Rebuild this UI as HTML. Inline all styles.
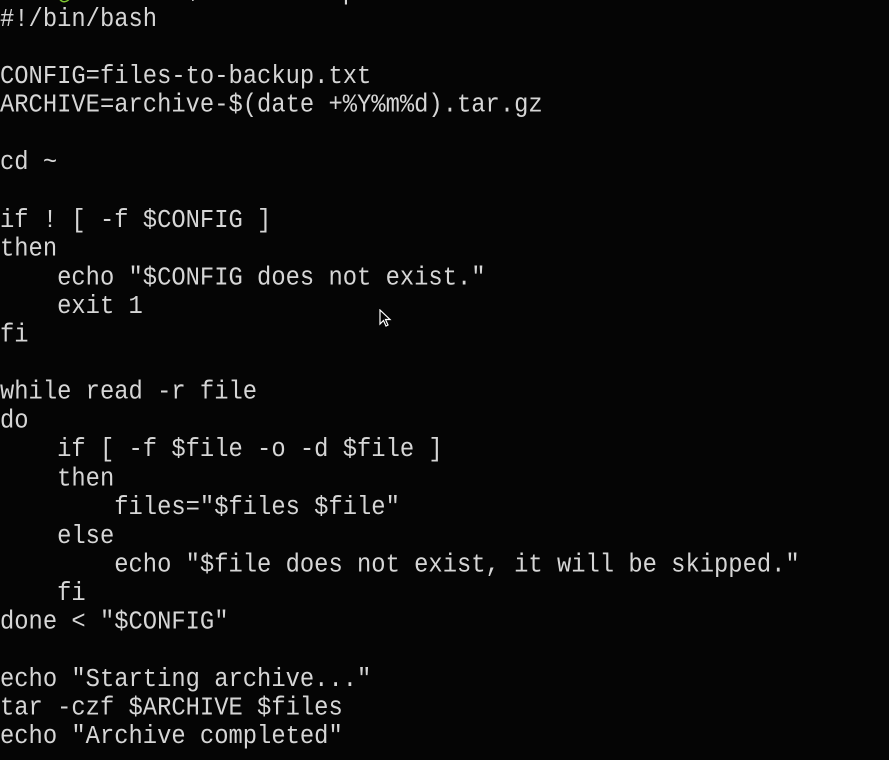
<!DOCTYPE html>
<html><head><meta charset="utf-8"><style>
html,body{margin:0;padding:0;background:#050505;width:889px;height:760px;overflow:hidden}
pre{position:absolute;left:0;top:6px;margin:0;font-family:"Liberation Mono",monospace;font-size:23.8px;line-height:26.09px;color:#d6d6d6;transform:scaleY(1.1);transform-origin:0 0;}
.top{position:absolute;left:0;top:-22px;margin:0;font-family:"Liberation Mono",monospace;font-size:23.8px;line-height:28.7px;color:#d6d6d6}
.g{color:#7fc832}.b{color:#4b8fd8}
svg{position:absolute;left:379px;top:309px}
</style></head><body>
<pre class="top"><span class="g">bran@ubuntu</span>:<span class="b">~</span>$ cat backup.sh</pre>
<pre>#!/bin/bash

CONFIG=files-to-backup.txt
ARCHIVE=archive-$(date +%Y%m%d).tar.gz

cd ~

if ! [ -f $CONFIG ]
then
    echo "$CONFIG does not exist."
    exit 1
fi

while read -r file
do
    if [ -f $file -o -d $file ]
    then
        files="$files $file"
    else
        echo "$file does not exist, it will be skipped."
    fi
done &lt; "$CONFIG"

echo "Starting archive..."
tar -czf $ARCHIVE $files
echo "Archive completed"</pre>
<svg width="14" height="20" viewBox="0 0 14 20"><path d="M1 1 L1 15 L4.5 11.5 L7 17 L9 16 L6.5 10.5 L11 10.5 Z" fill="#000" stroke="#fff" stroke-width="1.2"/></svg>
</body></html>
